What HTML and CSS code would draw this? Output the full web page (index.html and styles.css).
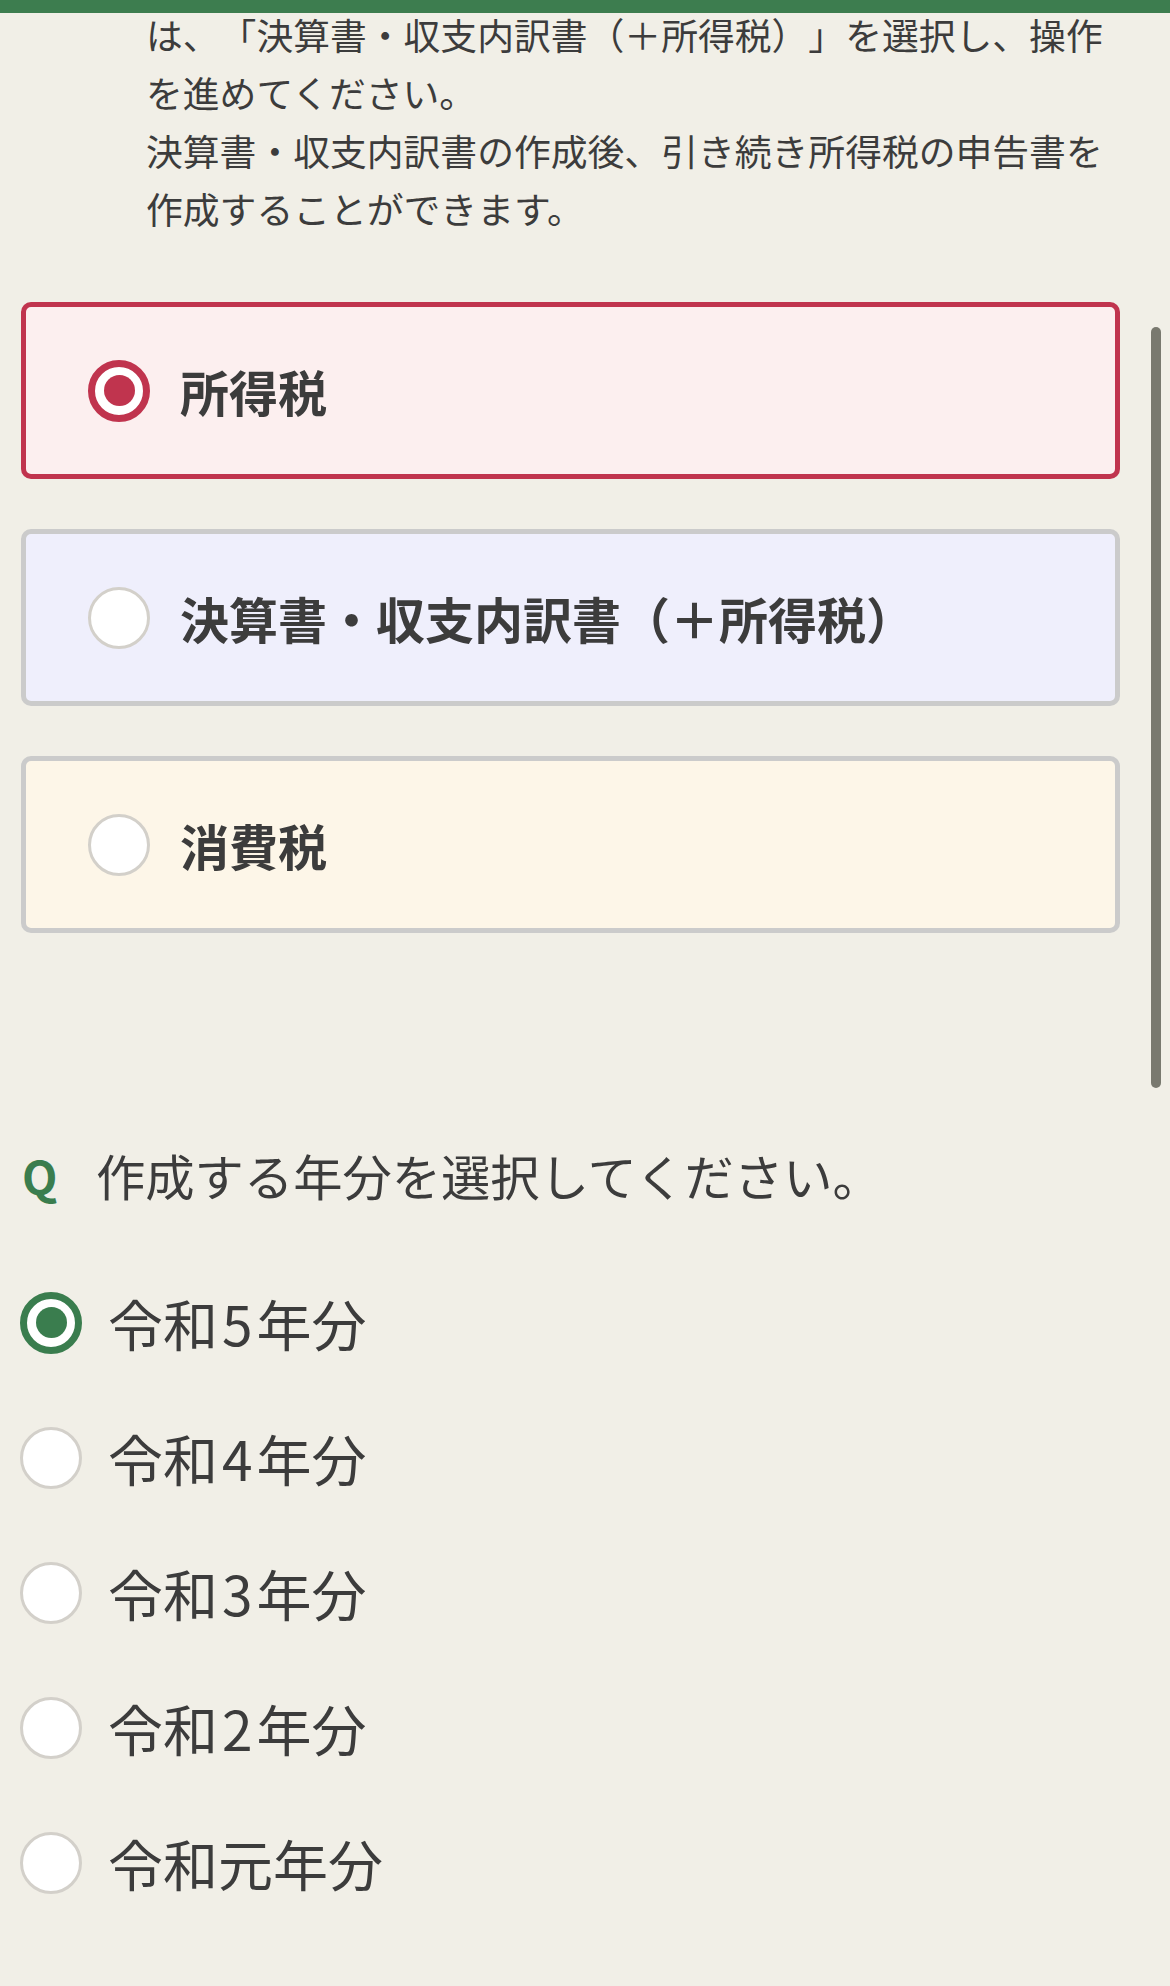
FILE: index.html
```html
<!DOCTYPE html>
<html lang="ja">
<head>
<meta charset="utf-8">
<title>作成する申告書等の選択</title>
<link rel="stylesheet" href="styles.css">
</head>
<body>
<div class="topbar"></div>
<div class="scrollbar"></div>
<main class="page">
  <p class="notice">は、「決算書・収支内訳書（＋所得税）」を選択し、操作<br>を進めてください。<br>決算書・収支内訳書の作成後、引き続き所得税の申告書を<br>作成することができます。</p>

  <div class="options">
    <div class="card card-income">
      <span class="radio radio-red is-on"></span>
      <span class="card-label">所得税</span>
    </div>
    <div class="card card-statement">
      <span class="radio"></span>
      <span class="card-label">決算書・収支内訳書（＋所得税）</span>
    </div>
    <div class="card card-consumption">
      <span class="radio"></span>
      <span class="card-label">消費税</span>
    </div>
  </div>

  <div class="question">
    <span class="q-mark">Q</span>
    <span class="q-text">作成する年分を選択してください。</span>
  </div>

  <ul class="years">
    <li class="year"><span class="radio radio-green is-on"></span><span class="year-label">令和<span class="num">5</span>年分</span></li>
    <li class="year"><span class="radio"></span><span class="year-label">令和<span class="num">4</span>年分</span></li>
    <li class="year"><span class="radio"></span><span class="year-label">令和<span class="num">3</span>年分</span></li>
    <li class="year"><span class="radio"></span><span class="year-label">令和<span class="num">2</span>年分</span></li>
    <li class="year"><span class="radio"></span><span class="year-label">令和元年分</span></li>
  </ul>
</main>
</body>
</html>
```
FILE: styles.css
```css
html, body {
  margin: 0;
  padding: 0;
}
body {
  background: #f1efe7;
  color: #3c3c3c;
  font-family: "Noto Sans CJK JP", "Noto Sans", sans-serif;
  text-spacing-trim: space-all;
}
.topbar {
  position: fixed;
  top: 0;
  left: 0;
  right: 0;
  height: 13px;
  background: #3d7d4f;
  z-index: 5;
}
.scrollbar {
  position: fixed;
  top: 327px;
  right: 9px;
  width: 10px;
  height: 761px;
  border-radius: 5px;
  background: #79796f;
  z-index: 5;
}
.page {
  padding-top: 5px;
}
.notice {
  margin: 0;
  padding-left: 146px;
  font-size: 36.8px;
  line-height: 58px;
  white-space: nowrap;
}
.options {
  display: flex;
  flex-direction: column;
  gap: 50px;
  margin-top: 65px;
  padding: 0 50px 0 21px;
}
.card {
  box-sizing: border-box;
  height: 177px;
  border: 5px solid #cbcbcb;
  border-radius: 10px;
  display: flex;
  align-items: center;
  gap: 30px;
  padding-left: 62px;
}
.card-income {
  background: #fcefef;
  border-color: #c0344e;
}
.card-statement {
  background: #efeffc;
}
.card-consumption {
  background: #fdf6e8;
}
.card-label {
  font-size: 49px;
  font-weight: 700;
  line-height: 1;
}
.radio {
  box-sizing: border-box;
  flex: none;
  width: 62px;
  height: 62px;
  border-radius: 50%;
  background: #ffffff;
  border: 3px solid #d3d0ca;
  display: flex;
  align-items: center;
  justify-content: center;
}
.radio.is-on {
  border-width: 7px;
}
.radio.is-on::after {
  content: "";
  width: 31px;
  height: 31px;
  border-radius: 50%;
}
.radio-red.is-on {
  border-color: #c0344e;
}
.radio-red.is-on::after {
  background: #c0344e;
}
.radio-green.is-on {
  border-color: #3a7d4e;
}
.radio-green.is-on::after {
  background: #3a7d4e;
}
.question {
  display: flex;
  align-items: center;
  margin-top: 206px;
  padding-left: 22px;
  height: 72px;
}
.q-mark {
  width: 74px;
  color: #3a7d4e;
  font-size: 46px;
  font-weight: 700;
  line-height: 1;
}
.q-text {
  font-size: 49.3px;
  line-height: 72px;
}
.years {
  list-style: none;
  margin: 44px 0 0;
  padding: 0 0 0 20px;
}
.year {
  height: 135px;
  display: flex;
  align-items: center;
  gap: 26px;
}
.year-label {
  font-size: 55px;
  line-height: 1;
}
.num {
  margin: 0 4px;
}
```
